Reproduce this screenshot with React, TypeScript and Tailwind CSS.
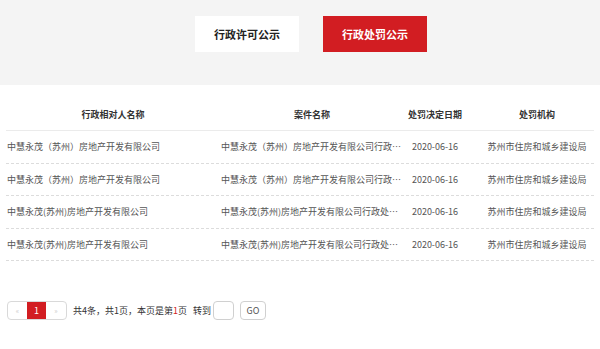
import React from "react";

type Row = { party: string; caseName: string; date: string; org: string };

const ROWS: Row[] = [
  {
    party: "中慧永茂（苏州）房地产开发有限公司",
    caseName: "中慧永茂（苏州）房地产开发有限公司行政处罚决定书",
    date: "2020-06-16",
    org: "苏州市住房和城乡建设局",
  },
  {
    party: "中慧永茂（苏州）房地产开发有限公司",
    caseName: "中慧永茂（苏州）房地产开发有限公司行政处罚决定书",
    date: "2020-06-16",
    org: "苏州市住房和城乡建设局",
  },
  {
    party: "中慧永茂(苏州)房地产开发有限公司",
    caseName: "中慧永茂(苏州)房地产开发有限公司行政处罚决定书",
    date: "2020-06-16",
    org: "苏州市住房和城乡建设局",
  },
  {
    party: "中慧永茂(苏州)房地产开发有限公司",
    caseName: "中慧永茂(苏州)房地产开发有限公司行政处罚决定书",
    date: "2020-06-16",
    org: "苏州市住房和城乡建设局",
  },
];

const COLS = "grid grid-cols-[214px_186px_74px_114px]";

export default function App() {
  return (
    <div className="h-[349px] w-[600px] bg-white font-['Noto_Sans_CJK_SC',sans-serif] text-[9px] text-[#555]">
      {/* tab switch */}
      <div className="flex h-[85px] justify-center gap-[24px] bg-[#f4f4f4] pt-[16px] pl-[22px]">
        <button className="h-[36px] w-[104px] bg-white text-[11px] font-bold text-[#222]">
          行政许可公示
        </button>
        <button className="h-[36px] w-[104px] bg-[#d21d22] text-[11px] font-bold text-white">
          行政处罚公示
        </button>
      </div>

      {/* table */}
      <div className="px-[6px] pt-[14px]">
        <div className={`${COLS} h-[32px] items-center border-b border-[#ebebeb] font-bold text-[#333]`}>
          <div className="text-center">行政相对人名称</div>
          <div className="pr-[2px] text-center">案件名称</div>
          <div className="pr-[16px] text-center">处罚决定日期</div>
          <div className="text-center">处罚机构</div>
        </div>
        {ROWS.map((r, i) => (
          <div
            key={i}
            className={`${COLS} h-[32.5px] items-center border-b border-dashed border-[#dcdcdc]`}
          >
            <div className="truncate pl-px">{r.party}</div>
            <div className="truncate pr-[2px] pl-px">{r.caseName}</div>
            <div className="pr-[16px] text-center">{r.date}</div>
            <div className="text-center">{r.org}</div>
          </div>
        ))}
      </div>

      {/* pagination */}
      <div className="mt-[40px] flex items-center px-[7px] text-[#333]">
        <div className="flex h-[19px] items-stretch rounded-sm border border-[#d9d9d9]">
          <span className="flex w-[19px] items-center justify-center text-[7px] text-[#ccc]">«</span>
          <span className="flex w-[19px] items-center justify-center bg-[#d21d22] text-white">1</span>
          <span className="flex w-[20px] items-center justify-center text-[7px] text-[#ccc]">»</span>
        </div>
        <span className="ml-[6px]">
          共4条，共1页，本页是第<span className="text-[#d21d22]">1</span>页&nbsp;&nbsp;&nbsp;转到
        </span>
        <span className="ml-[2px] h-[19px] w-[21px] rounded-sm border border-[#d0d0d0]" />
        <span className="ml-[6px] flex h-[19px] w-[26px] items-center justify-center rounded-sm border border-[#d0d0d0] text-[#555]">
          GO
        </span>
      </div>
    </div>
  );
}
